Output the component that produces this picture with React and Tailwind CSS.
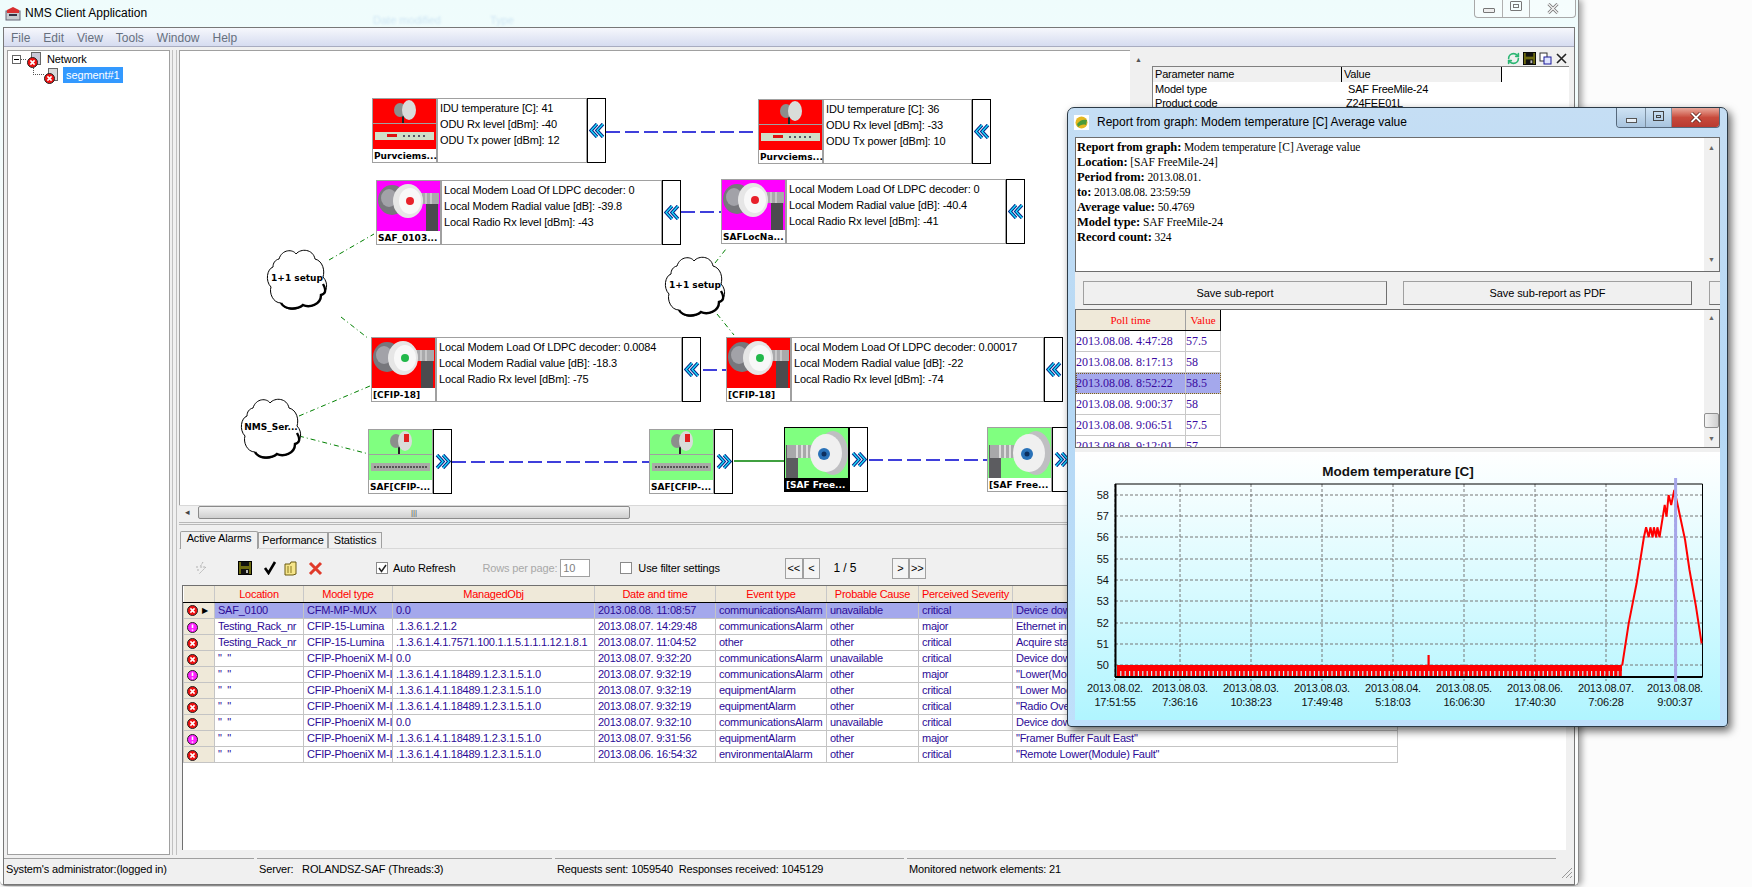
import { RefreshCw } from 'lucide-react'

// node widgets on the topology canvas
function Chevrons({ dir }) {
  const d = dir === 'left'
    ? ['M8 1 L2 7.5 L8 14', 'M14 1 L8 7.5 L14 14']
    : ['M2 1 L8 7.5 L2 14', 'M8 1 L14 7.5 L8 14']
  return (
    <svg width="16" height="15" viewBox="0 0 16 15">
      {d.map((p) => (
        <g key={p} fill="none">
          <path d={p} stroke="#0a2a8c" strokeWidth="3.4" />
          <path d={p} stroke="#19e3ff" strokeWidth="1.2" />
        </g>
      ))}
    </svg>
  )
}

function RadioDish({ dot }) {
  return (
    <svg width="63" height="51" viewBox="0 0 63 51" className="block">
      <rect x="49" y="20" width="12" height="31" fill="#4b4b4e" />
      <rect x="38" y="12" width="24" height="11" fill="#a9a9ab" />
      <path d="M44 12 v11 M49 12 v11 M54 12 v11" stroke="#e4e4e4" />
      <ellipse cx="15" cy="19" rx="14" ry="15" fill="#77777c" />
      <ellipse cx="12" cy="17" rx="8" ry="9" fill="#a2a2a8" />
      <ellipse cx="31" cy="20" rx="15" ry="17" fill="#e6e6e6" />
      <ellipse cx="33" cy="20" rx="11" ry="13" fill="#f8f8f8" />
      <circle cx="33" cy="20" r="4" fill={dot} />
    </svg>
  )
}

function FreeMileDish() {
  return (
    <svg width="63" height="51" viewBox="0 0 63 51" className="block">
      <rect x="1" y="17" width="12" height="34" fill="#5c5c60" />
      <rect x="2" y="17" width="26" height="13" fill="#a8a8aa" />
      <path d="M12 17 v13 M17 17 v13 M22 17 v13" stroke="#eeeeee" strokeWidth="1.5" />
      <ellipse cx="48" cy="25" rx="15" ry="22" fill="#bfbfc2" />
      <ellipse cx="41" cy="25" rx="16" ry="19" fill="#f0f0f0" />
      <circle cx="39" cy="26" r="6" fill="#2a72b8" />
      <circle cx="39" cy="26" r="2.5" fill="#0d2f5e" />
    </svg>
  )
}

function SmallAntenna({ red }) {
  return (
    <svg width="63" height="25" viewBox="0 0 63 25" className="block">
      <rect x="29" y="12" width="2" height="12" fill="#222" />
      <ellipse cx="27" cy="11" rx="6" ry="7" fill="#8c8f8c" />
      <ellipse cx="36" cy="11" rx="7" ry="10" fill="#d9dcd9" />
      {red && <rect x="35" y="4" width="5" height="8" fill="#e02020" />}
    </svg>
  )
}

function IduBox({ rack }) {
  return (
    <svg width="63" height="25" viewBox="0 0 63 25" className="block">
      <rect x="2" y="8" width="59" height="8" fill={rack ? '#a9aba6' : '#cfe0c8'} />
      {rack
        ? <path d="M5 12 H58" stroke="#555" strokeWidth="2" strokeDasharray="2 1" />
        : <>
            <rect x="14" y="10" width="10" height="3" fill="#e01010" />
            <path d="M30 12 H52" stroke="#556" strokeWidth="2" strokeDasharray="2 3" />
          </>}
    </svg>
  )
}

function Node({ pos, bg, art, label, lines, textW, dir = 'left', dark }) {
  return (
    <div className={`absolute flex h-[65px] ${pos}`}>
      <div className={`flex flex-col w-[65px] border ${dark ? 'border-black bg-black' : 'border-[#a0a0a0] bg-white'}`}>
        <div className={`h-[50px] overflow-hidden ${bg}`}>{art}</div>
        <div className={`flex-1 pl-[1px] pt-[1px] font-['DejaVu_Sans',sans-serif] font-bold text-[9px] leading-[12px] tracking-normal whitespace-nowrap ${dark ? 'text-white' : 'text-black'}`}>
          {label}
        </div>
      </div>
      {lines && (
        <div className={`${textW} border border-[#a0a0a0] bg-white pl-[2px] pt-[1px] text-[11px] leading-[16px] tracking-[-0.15px] text-black`}>
          {lines.map((l) => <div key={l} className="whitespace-nowrap">{l}</div>)}
        </div>
      )}
      <div className="w-[19px] border border-black bg-white flex items-center justify-center">
        <Chevrons dir={dir} />
      </div>
    </div>
  )
}

function Cloud({ pos, label }) {
  return (
    <div className={`absolute w-[64px] h-[64px] ${pos}`}>
      <svg width="64" height="64" viewBox="0 0 64 64" className="absolute inset-0">
        <path
          d="M14 12 C17 2 28 2 31 7 C36 1 48 2 50 12 C58 14 60 24 58 30 C64 36 62 46 56 48 C56 58 44 62 38 58 C32 64 20 64 16 56 C8 56 4 46 6 40 C0 34 2 22 8 20 C8 16 10 13 14 12 Z"
          fill="#fff"
          stroke="#000"
          strokeWidth="1"
        />
        <path d="M58 37 C62 44 60 47 56 48 C56 58 44 61 38 58 C32 63 20 63 16 56" fill="none" stroke="#000" strokeWidth="2.4" />
      </svg>
      <div className="absolute inset-0 flex items-center justify-center font-['DejaVu_Sans',sans-serif] font-bold text-[9px] tracking-normal text-black whitespace-nowrap">
        {label}
      </div>
    </div>
  )
}

function TopologyCanvas() {
  const dashed = [
    [605, 131, 758, 131],
    [680, 211, 721, 211],
    [702, 369, 726, 369],
    [451, 461, 650, 461],
    [868, 459, 987, 459],
  ]
  const setup = [
    [328, 259, 373, 233],
    [714, 262, 725, 248],
    [716, 313, 733, 334],
    [340, 316, 368, 338],
    [298, 415, 369, 385],
    [298, 435, 368, 453],
  ]
  const iduLines = (a, b, c) => [`IDU temperature [C]: ${a}`, `ODU Rx level [dBm]: ${b}`, `ODU Tx power [dBm]: ${c}`]
  const modemLines = (a, b, c) => [`Local Modem Load Of LDPC decoder: ${a}`, `Local Modem Radial value [dB]: ${b}`, `Local Radio Rx level [dBm]: ${c}`]
  const split = (top, bottom) => (
    <div>
      {top}
      <div className="h-px bg-[#a0a0a0] -mt-px" />
      {bottom}
    </div>
  )

  return (
    <div className="relative flex-1 bg-white border-l border-t border-[#a0a0a0] overflow-hidden">
      <svg className="absolute inset-0" width="951" height="455" viewBox="179 50 951 455">
        {dashed.map(([a, b, c, d]) => (
          <line key={a} x1={a} y1={b} x2={c} y2={d} stroke="#0000d0" strokeWidth="1.3" strokeDasharray="14 5" />
        ))}
        <line x1="733" y1="460" x2="785" y2="460" stroke="#008000" strokeWidth="1.3" />
        {setup.map(([a, b, c, d]) => (
          <line key={a} x1={a} y1={b} x2={c} y2={d} stroke="#008000" strokeWidth="1" strokeDasharray="5 3 1 3" />
        ))}
      </svg>

      <Cloud pos="left-[85px] top-[196px]" label="1+1 setup" />
      <Cloud pos="left-[483px] top-[203px]" label="1+1 setup" />
      <Cloud pos="left-[59px] top-[345px]" label="NMS_Ser..." />

      <Node pos="left-[192px] top-[47px]" bg="bg-[#ff0000]" label="Purvciems..." textW="w-[150px]" lines={iduLines(41, -40, 12)} art={split(<SmallAntenna />, <IduBox />)} />
      <Node pos="left-[578px] top-[48px]" bg="bg-[#ff0000]" label="Purvciems..." textW="w-[149px]" lines={iduLines(36, -33, 10)} art={split(<SmallAntenna />, <IduBox />)} />
      <Node pos="left-[196px] top-[129px]" bg="bg-[#ff00ff]" label="SAF_0103..." textW="w-[221px]" lines={modemLines(0, '-39.8', -43)} art={<RadioDish dot="#e8202a" />} />
      <Node pos="left-[541px] top-[128px]" bg="bg-[#ff00ff]" label="SAFLocNa..." textW="w-[220px]" lines={modemLines(0, '-40.4', -41)} art={<RadioDish dot="#e8202a" />} />
      <Node pos="left-[191px] top-[286px]" bg="bg-[#ff0000]" label="[CFIP-18]" textW="w-[246px]" lines={modemLines('0.0084', '-18.3', -75)} art={<RadioDish dot="#22b84a" />} />
      <Node pos="left-[546px] top-[286px]" bg="bg-[#ff0000]" label="[CFIP-18]" textW="w-[253px]" lines={modemLines('0.00017', -22, -74)} art={<RadioDish dot="#22b84a" />} />
      <Node pos="left-[188px] top-[378px]" bg="bg-[#80ff80]" dir="right" label="SAF[CFIP-..." art={split(<SmallAntenna red />, <IduBox rack />)} />
      <Node pos="left-[469px] top-[378px]" bg="bg-[#80ff80]" dir="right" label="SAF[CFIP-..." art={split(<SmallAntenna red />, <IduBox rack />)} />
      <Node pos="left-[604px] top-[376px]" bg="bg-[#80ff80]" dir="right" dark label="[SAF Free..." art={<FreeMileDish />} />
      <Node pos="left-[807px] top-[376px]" bg="bg-[#80ff80]" dir="right" label="[SAF Free..." art={<FreeMileDish />} />
    </div>
  )
}

function HorizontalScroll() {
  return (
    <div className="h-[14px] flex items-stretch bg-[#f0f0f0] border-t border-[#d8d8d8]">
      <div className="w-[17px] flex items-center justify-center text-[9px] text-[#444]">◂</div>
      <div className="ml-[2px] w-[432px] flex items-center justify-center bg-gradient-to-b from-[#f2f2f2] to-[#cfcfcf] border border-[#8a8a8a] rounded-[2px] text-[8px] leading-none text-[#555]">
        |||
      </div>
    </div>
  )
}

function ParameterPanel() {
  return (
    <div className="w-[418px] flex flex-col bg-[#f0f0f0]">
      <div className="h-[16px] flex items-center justify-end gap-[3px] pr-[1px]">
        <RefreshCw size={13} strokeWidth={3} className="text-[#2bb673]" />
        <FloppyIcon size={13} />
        <svg width="13" height="13" viewBox="0 0 13 13">
          <rect x="1" y="1" width="7" height="8" fill="#fff" stroke="#333" />
          <rect x="5" y="5" width="7" height="7" fill="#dfe4ff" stroke="#1a1a9a" />
        </svg>
        <svg width="13" height="13" viewBox="0 0 13 13">
          <path d="M2 2 L11 11 M11 2 L2 11" stroke="#222" strokeWidth="1.6" />
        </svg>
      </div>
      <div className="flex-1 bg-white border-t border-l border-[#808080] ml-[1px] text-[11px] tracking-[-0.2px] text-black">
        <div className="flex h-[15px] w-[349px] bg-[#f0f0f0] leading-[14px]">
          <div className="w-[189px] pl-[2px] border-r border-black">Parameter name</div>
          <div className="w-[160px] pl-[2px] border-r border-black">Value</div>
        </div>
        <div className="flex h-[14px] leading-[14px]">
          <div className="w-[189px] pl-[2px]">Model type</div>
          <div className="pl-[6px]">SAF FreeMile-24</div>
        </div>
        <div className="flex h-[14px] leading-[14px]">
          <div className="w-[189px] pl-[2px]">Product code</div>
          <div className="pl-[4px]">Z24FEE01L</div>
        </div>
      </div>
    </div>
  )
}

function FloppyIcon({ size }) {
  return (
    <svg width={size} height={size} viewBox="0 0 14 14">
      <rect x="0.5" y="0.5" width="13" height="13" fill="#6d6a10" stroke="#000" />
      <rect x="3" y="1" width="8" height="4" fill="#111" />
      <rect x="3" y="8" width="8" height="5.5" fill="#111" />
      <rect x="8" y="9" width="2" height="3" fill="#bbb" />
    </svg>
  )
}

function AlarmIcon({ major }) {
  return (
    <svg width="11" height="11" viewBox="0 0 11 11" className="inline-block">
      <circle cx="5.5" cy="5.5" r="5" fill={major ? '#ff20ff' : '#f01010'} stroke="#222" />
      {major
        ? <path d="M5.5 2.5 V6 M5.5 7.5 V8.8" stroke="#fff" strokeWidth="1.6" />
        : <path d="M3.4 3.4 L7.6 7.6 M7.6 3.4 L3.4 7.6" stroke="#fff" strokeWidth="1.5" />}
    </svg>
  )
}

const alarms = [
  ['SAF_0100', 'CFM-MP-MUX', '0.0', '2013.08.08. 11:08:57', 'communicationsAlarm', 'unavailable', 'critical', 'Device down'],
  ['Testing_Rack_nr', 'CFIP-15-Lumina', '.1.3.6.1.2.1.2', '2013.08.07. 14:29:48', 'communicationsAlarm', 'other', 'major', 'Ethernet interface'],
  ['Testing_Rack_nr', 'CFIP-15-Lumina', '.1.3.6.1.4.1.7571.100.1.1.5.1.1.1.12.1.8.1', '2013.08.07. 11:04:52', 'other', 'other', 'critical', 'Acquire status'],
  ['"  "', 'CFIP-PhoeniX M-I', '0.0', '2013.08.07. 9:32:20', 'communicationsAlarm', 'unavailable', 'critical', 'Device down'],
  ['"  "', 'CFIP-PhoeniX M-I', '.1.3.6.1.4.1.18489.1.2.3.1.5.1.0', '2013.08.07. 9:32:19', 'communicationsAlarm', 'other', 'major', '"Lower(Module) Fault"'],
  ['"  "', 'CFIP-PhoeniX M-I', '.1.3.6.1.4.1.18489.1.2.3.1.5.1.0', '2013.08.07. 9:32:19', 'equipmentAlarm', 'other', 'critical', '"Lower Modem Fault"'],
  ['"  "', 'CFIP-PhoeniX M-I', '.1.3.6.1.4.1.18489.1.2.3.1.5.1.0', '2013.08.07. 9:32:19', 'equipmentAlarm', 'other', 'critical', '"Radio Overload"'],
  ['"  "', 'CFIP-PhoeniX M-I', '0.0', '2013.08.07. 9:32:10', 'communicationsAlarm', 'unavailable', 'critical', 'Device down'],
  ['"  "', 'CFIP-PhoeniX M-I', '.1.3.6.1.4.1.18489.1.2.3.1.5.1.0', '2013.08.07. 9:31:56', 'equipmentAlarm', 'other', 'major', '"Framer Buffer Fault East"'],
  ['"  "', 'CFIP-PhoeniX M-I', '.1.3.6.1.4.1.18489.1.2.3.1.5.1.0', '2013.08.06. 16:54:32', 'environmentalAlarm', 'other', 'critical', '"Remote Lower(Module) Fault"'],
]

const alarmHeaders = ['Location', 'Model type', 'ManagedObj', 'Date and time', 'Event type', 'Probable Cause', 'Perceived Severity', '']

function AlarmTable() {
  return (
    <div className="flex-1 ml-[3px] mr-[4px] mb-[5px] bg-white border-t border-l border-[#707070] overflow-hidden">
      <table className="table-fixed border-collapse w-[1214px] text-[11px] tracking-[-0.25px]">
        <colgroup>
          <col className="w-[31px]" />
          <col className="w-[89px]" />
          <col className="w-[89px]" />
          <col className="w-[202px]" />
          <col className="w-[121px]" />
          <col className="w-[111px]" />
          <col className="w-[92px]" />
          <col className="w-[94px]" />
          <col className="w-[385px]" />
        </colgroup>
        <thead>
          <tr className="h-[16px] bg-[#efe9d9] text-[#ff0000]">
            <th className="border-r border-[#c8c8c8] border-b border-b-black" />
            {alarmHeaders.map((h) => (
              <th key={h} className="border-r border-[#c8c8c8] border-b border-b-black font-normal pt-[1px] leading-[14px] whitespace-nowrap overflow-hidden">{h}</th>
            ))}
          </tr>
        </thead>
        <tbody>
          {alarms.map((row, i) => (
            <tr key={i} className={`h-[16px] text-[#2c0a96] ${i === 0 ? 'bg-[#a4a8ec]' : ''}`}>
              <td className="bg-[#efe9d9] border border-[#c4c4c4] pl-[3px] leading-[14px] whitespace-nowrap overflow-hidden">
                <AlarmIcon major={row[6] === 'major'} />
                {i === 0 && <span className="ml-[4px] text-[8px] align-[1px] text-black">▶</span>}
              </td>
              {row.map((cell, c) => (
                <td key={c} className="border border-[#c4c4c4] pl-[3px] pr-[2px] leading-[14px] whitespace-pre overflow-hidden">{cell}</td>
              ))}
            </tr>
          ))}
        </tbody>
      </table>
    </div>
  )
}

function AlarmToolbar() {
  return (
    <div className="h-[36px] pt-[2px] flex items-center text-[11px] tracking-[-0.15px] text-black">
      <svg width="12" height="14" viewBox="0 0 12 14" className="ml-[16px]">
        <path d="M8 1 L5 6 H11 L4 13 M1 6 H4 M2 9 H4" fill="none" stroke="#b0b0b0" strokeDasharray="2 1" />
      </svg>
      <div className="ml-[31px]"><FloppyIcon size={14} /></div>
      <svg width="14" height="14" viewBox="0 0 14 14" className="ml-[11px]">
        <path d="M2 7 L5.5 12 L12 1" fill="none" stroke="#000" strokeWidth="2.6" />
      </svg>
      <svg width="14" height="15" viewBox="0 0 14 15" className="ml-[7px]">
        <path d="M1 3 H6 L7 1 H12 V13 L9 14 H1 Z" fill="#f6e58a" stroke="#6b5a10" />
        <path d="M4 5 V12 M7 5 V12" stroke="#8a7a20" />
      </svg>
      <svg width="15" height="15" viewBox="0 0 15 15" className="ml-[10px]">
        <path d="M2 2 L13 13 M13 2 L2 13" stroke="#e03a2a" strokeWidth="3" />
      </svg>
      <div className="ml-[53px] w-[12px] h-[12px] border border-[#8a8a8a] bg-white flex items-center justify-center">
        <svg width="9" height="9" viewBox="0 0 9 9"><path d="M1 4 L3.5 7.5 L8 1" fill="none" stroke="#222" strokeWidth="1.5" /></svg>
      </div>
      <span className="ml-[5px]">Auto Refresh</span>
      <span className="ml-[27px] text-[#a8a8a8]">Rows per page:</span>
      <div className="ml-[3px] w-[30px] h-[18px] border border-[#a0a0a0] bg-white pl-[2px] leading-[16px] text-[#808080]">10</div>
      <div className="ml-[30px] w-[12px] h-[12px] border border-[#8a8a8a] bg-white" />
      <span className="ml-[6px]">Use filter settings</span>
      <div className="ml-[65px] flex h-[21px]">
        <div className="w-[18px] border border-[#a0a0a0] bg-[#f4f4f4] text-center leading-[19px]">&lt;&lt;</div>
        <div className="w-[17px] border border-[#a0a0a0] bg-[#f4f4f4] text-center leading-[19px]">&lt;</div>
      </div>
      <span className="ml-[5px] w-[40px] text-center text-[12px]">1 / 5</span>
      <div className="ml-[27px] flex h-[21px]">
        <div className="w-[17px] border border-[#a0a0a0] bg-[#f4f4f4] text-center leading-[19px]">&gt;</div>
        <div className="w-[17px] border border-[#a0a0a0] bg-[#f4f4f4] text-center leading-[19px]">&gt;&gt;</div>
      </div>
    </div>
  )
}

function BottomTabs() {
  return (
    <div className="h-[327px] flex flex-col bg-[#f0f0f0]">
      <div className="h-[21px] flex items-end pl-[1px] border-b border-[#d8d8d8] text-[11px] tracking-[-0.15px] text-black">
        <div className="w-[78px] h-[18px] -mb-px z-10 bg-[#f0f0f0] border border-b-0 border-[#a0a0a0] rounded-t-[2px] text-center leading-[13px]">Active Alarms</div>
        <div className="w-[70px] h-[16px] border border-b-0 border-[#a0a0a0] text-center leading-[14px]">Performance</div>
        <div className="w-[54px] h-[16px] border border-b-0 border-[#a0a0a0] text-center leading-[14px]">Statistics</div>
      </div>
      <AlarmToolbar />
      <AlarmTable />
    </div>
  )
}

function NetworkTree() {
  return (
    <div className="w-[163px] bg-white border border-[#a0a0a0] relative text-[11px] tracking-[-0.1px] text-black">
      <div className="flex items-center h-[16px] pl-[4px]">
        <div className="w-[9px] h-[9px] border border-[#666] flex items-center justify-center">
          <div className="w-[5px] h-px bg-black" />
        </div>
        <div className="w-[5px] border-t border-dotted border-[#555]" />
        <div className="relative w-[14px] h-[14px] ml-[1px]">
          <div className="absolute right-0 top-0 w-[10px] h-[13px] bg-[#c8c8d8] border border-[#666]" />
          <div className="absolute left-0 top-[1px]"><AlarmIcon /></div>
        </div>
        <span className="ml-[6px]">Network</span>
      </div>
      <div className="flex items-center h-[16px] pl-[25px]">
        <div className="w-[11px] h-[7px] -mt-[7px] border-l border-b border-dotted border-[#555]" />
        <div className="relative w-[14px] h-[14px]">
          <div className="absolute right-0 top-0 w-[10px] h-[13px] bg-[#d8d8d8] border border-[#666]" />
          <div className="absolute left-0 top-[1px]"><AlarmIcon /></div>
        </div>
        <span className="ml-[5px] px-[3px] h-[16px] leading-[16px] bg-[#3399ff] text-white">segment#1</span>
      </div>
    </div>
  )
}

function MainWindow() {
  const status = [
    ['w-[250px]', "System's administrator:(logged in)"],
    ['w-[295px]', 'Server:   ROLANDSZ-SAF (Threads:3)'],
    ['w-[349px]', 'Requests sent: 1059540  Responses received: 1045129'],
    ['flex-1', 'Monitored network elements: 21'],
  ]
  return (
    <div className="w-[1579px] h-[886px] flex flex-col rounded-b-[5px] bg-gradient-to-b from-[#effcfc] via-[#fcfdfd] to-[#fcfdfd] border-r border-b border-[#8c8c8c] shadow-[3px_0_6px_rgba(0,0,0,0.35)] px-[3px]">
      <div className="h-[27px] flex items-start">
        <svg width="16" height="15" viewBox="0 0 16 15" className="ml-[2px] mt-[6px]">
          <rect x="1" y="5" width="14" height="9" fill="#c8ccd0" stroke="#667" />
          <path d="M2 4 L8 1 L14 4 L14 7 L2 7 Z" fill="#d83030" />
          <rect x="4" y="8" width="8" height="2" fill="#334" />
        </svg>
        <span className="ml-[4px] mt-[5px] text-[12px] leading-[16px] text-black">NMS Client Application</span>
        <span className="ml-[226px] mt-[13px] text-[11px] leading-[14px] text-[#cfe6f4] blur-[1px]">Date modified</span>
        <span className="ml-[49px] mt-[13px] text-[11px] leading-[14px] text-[#cfe6f4] blur-[1px]">Type</span>
        <div className="ml-auto mr-[-1px] w-[102px] h-[18px] flex border border-t-0 border-[#a8a8a8] rounded-b-[4px] bg-white/40">
          <div className="w-[28px] flex items-center justify-center border-r border-[#b0b0b0]">
            <div className="w-[12px] h-[5px] border border-[#777] bg-[#eee] rounded-[1px] mt-[3px]" />
          </div>
          <div className="w-[27px] flex items-center justify-center border-r border-[#b0b0b0]">
            <div className="w-[12px] h-[10px] border border-[#777] rounded-[1px] flex items-center justify-center -mt-[5px]">
              <div className="w-[6px] h-[4px] border border-[#777]" />
            </div>
          </div>
          <div className="flex-1 flex items-center justify-center">
            <svg width="12" height="11" viewBox="0 0 12 11">
              <path d="M1.5 1 L10.5 10 M10.5 1 L1.5 10" stroke="#777" strokeWidth="3" />
              <path d="M1.5 1 L10.5 10 M10.5 1 L1.5 10" stroke="#f4f4f4" strokeWidth="1.4" />
            </svg>
          </div>
        </div>
      </div>

      <div className="flex-1 flex flex-col min-h-0 border border-[#777] bg-[#f0f0f0]">
        <div className="h-[19px] pt-[2px] flex items-center gap-[13px] pl-[7px] bg-gradient-to-b from-[#f6f7fc] to-[#d6dcf0] border-b border-[#a8acc0] text-[12px] text-[#66707e]">
          {['File', 'Edit', 'View', 'Tools', 'Window', 'Help'].map((m) => <span key={m}>{m}</span>)}
        </div>

        <div className="h-[805px] mt-[3px] flex pl-[3px]">
          <NetworkTree />
          <div className="w-[9px] border-x border-[#c0c0c0] mx-[2px] shrink-0 basis-[5px]" />
          <div className="w-[1391px] flex flex-col">
            <div className="h-[469px] flex">
              <div className="w-[951px] flex flex-col">
                <TopologyCanvas />
                <HorizontalScroll />
              </div>
              <div className="w-[17px] bg-[#f0f0f0] flex justify-center pt-[5px] text-[7px] text-[#555]">▲</div>
              <div className="w-[4px]" />
              <ParameterPanel />
            </div>
            <div className="h-[9px] border-y border-[#b8b8b8] my-[3px] basis-[3px]" />
            <BottomTabs />
          </div>
        </div>

        <div className="h-[21px] mt-[3px] flex gap-[3px] text-[11px] tracking-[-0.15px] text-black">
          {status.map(([w, t]) => (
            <div key={t} className={`${w} border-t border-[#a0a0a0] leading-[20px] pl-[2px] whitespace-pre`}>{t}</div>
          ))}
          <svg width="14" height="14" viewBox="0 0 14 14" className="self-end mr-[1px]">
            <path d="M13 3 L3 13 M13 7 L7 13 M13 11 L11 13" stroke="#999" />
          </svg>
        </div>
      </div>
    </div>
  )
}

const pollRows = [
  ['2013.08.08. 4:47:28', '57.5'],
  ['2013.08.08. 8:17:13', '58'],
  ['2013.08.08. 8:52:22', '58.5'],
  ['2013.08.08. 9:00:37', '58'],
  ['2013.08.08. 9:06:51', '57.5'],
  ['2013.08.08. 9:12:01', '57'],
]

const reportLines = [
  ['Report from graph:', ' Modem temperature [C] Average value'],
  ['Location:', ' [SAF FreeMile-24]'],
  ['Period from:', ' 2013.08.01.'],
  ['to:', ' 2013.08.08. 23:59:59'],
  ['Average value:', ' 50.4769'],
  ['Model type:', ' SAF FreeMile-24'],
  ['Record count:', ' 324'],
]

function VScroll({ thumb }) {
  return (
    <div className="w-[15px] bg-[#f0f0f0] relative flex flex-col justify-between items-center py-[3px] text-[7px] text-[#666]">
      <span>▲</span>
      {thumb && <div className="absolute left-0 top-[103px] w-[15px] h-[15px] bg-gradient-to-r from-[#f4f4f4] to-[#cfcfcf] border border-[#909090] rounded-[2px]" />}
      <span>▼</span>
    </div>
  )
}

// the temperature chart, in screen coordinates so the axes line up with the shot
function TemperatureChart() {
  const yTicks = [[58, 495], [57, 516], [56, 537], [55, 559], [54, 580], [53, 601], [52, 623], [51, 644], [50, 665]]
  const xTicks = [
    [1115, '2013.08.02.', '17:51:55'],
    [1180, '2013.08.03.', '7:36:16'],
    [1251, '2013.08.03.', '10:38:23'],
    [1322, '2013.08.03.', '17:49:48'],
    [1393, '2013.08.04.', '5:18:03'],
    [1464, '2013.08.05.', '16:06:30'],
    [1535, '2013.08.06.', '17:40:30'],
    [1606, '2013.08.07.', '7:06:28'],
    [1675, '2013.08.08.', '9:00:37'],
  ]
  const rise = [
    [1285, 646], [1300, 520], [1318, 400], [1335, 262], [1340, 232], [1346, 262], [1350, 232], [1355, 262], [1358, 232],
    [1363, 262], [1366, 232], [1371, 262], [1383, 165], [1387, 200], [1392, 135], [1398, 165], [1405, 120], [1412, 160],
    [1430, 270], [1440, 360], [1455, 470], [1468, 580],
  ].map(([x, y]) => `${(1065 + x / 2.306).toFixed(1)},${(450 + y / 3).toFixed(1)}`)

  return (
    <div className="h-[268px] bg-gradient-to-b from-white to-[#b0f5ff]">
      <svg width="645" height="268" viewBox="1075 452 645 268" className="block font-['Liberation_Sans',sans-serif]">
        <text x="1398" y="476" textAnchor="middle" fontSize="13.5" fontWeight="700" fill="#111">Modem temperature [C]</text>
        {yTicks.map(([v, y]) => (
          <g key={v}>
            <line x1="1115" y1={y} x2="1702" y2={y} stroke="#777" strokeDasharray="3 2" />
            <text x="1109" y={y + 4} textAnchor="end" fontSize="11" fill="#111">{v}</text>
          </g>
        ))}
        {xTicks.map(([x, a, b]) => (
          <g key={x}>
            <line x1={x} y1="484" x2={x} y2="681" stroke="#777" strokeDasharray="3 2" />
            <text x={x} y="692" textAnchor="middle" fontSize="11" letterSpacing="-0.2" fill="#111">{a}</text>
            <text x={x} y="706" textAnchor="middle" fontSize="11" letterSpacing="-0.2" fill="#111">{b}</text>
          </g>
        ))}
        <path d="M1115 484 H1702.5 V677" fill="none" stroke="#000" />
        <path d="M1115.5 484 V677" stroke="#000" strokeWidth="2" />
        <rect x="1117" y="665" width="505" height="6" fill="#ff0000" />
        <line x1="1117" y1="673.5" x2="1622" y2="673.5" stroke="#ff0000" strokeWidth="5" strokeDasharray="3.2 1.2" />
        <rect x="1427.5" y="655" width="2.2" height="11" fill="#ff0000" />
        <polyline points={rise.join(' ')} fill="none" stroke="#ff0000" strokeWidth="2" />
        <path d="M1115 677 H1702.5" stroke="#000" strokeWidth="2" />
        <line x1="1675.6" y1="478" x2="1675.6" y2="682" stroke="#a6a6ea" strokeWidth="3" />
      </svg>
    </div>
  )
}

function ReportWindow() {
  return (
    <div className="absolute left-[1067px] top-[107px] w-[661px] h-[620px] flex flex-col rounded-t-[7px] rounded-b-[4px] border border-[#2c3a46] bg-gradient-to-b from-[#c5def4] via-[#b5d8f5] to-[#bfe0fb] px-[7px] pb-[6px] shadow-[3px_4px_9px_rgba(0,0,0,0.6)]">
      <div className="h-[29px] flex items-start shrink-0">
        <svg width="15" height="15" viewBox="0 0 15 15" className="mt-[7px] -ml-[1px] bg-white">
          <circle cx="7.5" cy="7.5" r="6" fill="#e5b820" />
          <path d="M3 9 C6 5 9 4 13 5 L12 10 C9 9 6 10 4 12 Z" fill="#4a9a3a" />
        </svg>
        <span className="ml-[8px] mt-[6px] text-[12px] leading-[16px] text-black">Report from graph: Modem temperature [C] Average value</span>
        <div className="ml-auto flex h-[20px] border border-t-0 border-[#56697c] rounded-b-[4px] overflow-hidden">
          <div className="w-[29px] flex items-center justify-center border-r border-[#7c8fa0] bg-gradient-to-b from-[#cfe3f4] to-[#a8c4de]">
            <div className="w-[11px] h-[5px] bg-white/70 border border-[#555] mt-[5px]" />
          </div>
          <div className="w-[26px] flex items-center justify-center border-r border-[#7c8fa0] bg-gradient-to-b from-[#cfe3f4] to-[#a8c4de]">
            <div className="w-[11px] h-[10px] border border-[#444] flex items-center justify-center -mt-[3px]">
              <div className="w-[5px] h-[3px] border border-[#444]" />
            </div>
          </div>
          <div className="w-[47px] flex items-center justify-center bg-gradient-to-b from-[#e8a89c] via-[#c84a3c] to-[#b83a30]">
            <svg width="12" height="11" viewBox="0 0 12 11">
              <path d="M1.5 1 L10.5 10 M10.5 1 L1.5 10" stroke="#5a2018" strokeWidth="3.4" />
              <path d="M1.5 1 L10.5 10 M10.5 1 L1.5 10" stroke="#fff" strokeWidth="1.8" />
            </svg>
          </div>
        </div>
      </div>

      <div className="flex-1 flex flex-col min-h-0 bg-[#f0f0f0]">
        <div className="h-[135px] flex border border-[#6d6d6d] bg-white font-['Liberation_Serif',serif] text-[12.5px] leading-[15px] tracking-[-0.1px] text-black shrink-0">
          <div className="flex-1 pl-[1px] pt-[2px]">
            {reportLines.map(([k, v]) => (
              <div key={k} className="whitespace-pre"><span className="font-bold">{k}</span><span className="text-[11.5px]">{v}</span></div>
            ))}
          </div>
          <VScroll />
        </div>

        <div className="h-[37px] shrink-0 flex items-start pt-[9px] text-[11px] tracking-[-0.1px] text-black">
          <button className="ml-[8px] w-[304px] h-[24px] bg-[#f0f0f0] border border-[#a0a0a0] border-b-[#707070] border-r-[#707070]">Save sub-report</button>
          <button className="ml-[16px] w-[289px] h-[24px] bg-[#f0f0f0] border border-[#a0a0a0] border-b-[#707070] border-r-[#707070]">Save sub-report as PDF</button>
          <div className="ml-[17px] flex-1 h-[24px] border border-r-0 border-[#a0a0a0] border-b-[#707070]" />
        </div>

        <div className="h-[139px] flex border border-[#6d6d6d] bg-white overflow-hidden font-['Liberation_Serif',serif] text-[12px] tracking-normal shrink-0">
          <div className="w-[145px]">
            <div className="flex h-[21px] bg-[#efe9d9] border-b border-black text-[#ff0000] text-[11px] leading-[20px] text-center">
              <div className="w-[110px] border-r border-[#a0a0a0]">Poll time</div>
              <div className="w-[35px] border-r border-black">Value</div>
            </div>
            {pollRows.map(([t, v], i) => (
              <div key={t} className={`flex h-[21px] leading-[20px] text-[#3a0aa0] border-b border-[#c8c8c8] ${i === 2 ? 'bg-[#a4a8ec] outline-1 outline-dotted outline-[#7a5a20] -outline-offset-1' : ''}`}>
                <div className="w-[110px] border-r border-[#c8c8c8] whitespace-nowrap overflow-hidden">{t}</div>
                <div className="w-[35px] border-r border-[#c8c8c8]">{v}</div>
              </div>
            ))}
          </div>
          <div className="flex-1" />
          <VScroll thumb />
        </div>

        <div className="h-[4px] shrink-0" />
        <TemperatureChart />
      </div>
    </div>
  )
}

export default function App() {
  return (
    <div className="relative w-[1752px] h-[887px] overflow-hidden bg-[#fcfcfc] font-['Liberation_Sans',sans-serif]">
      <MainWindow />
      <ReportWindow />
    </div>
  )
}
